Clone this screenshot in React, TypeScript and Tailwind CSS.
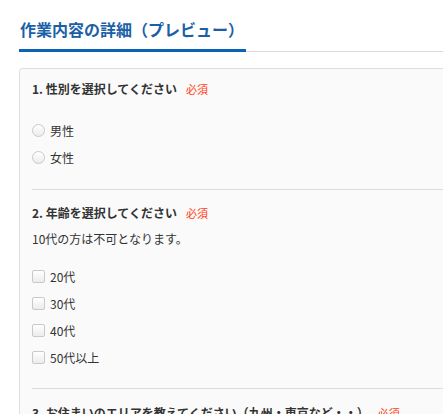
import React from "react";

const font = { fontFamily: '"Noto Sans CJK JP", "Noto Sans", sans-serif' };

function Required() {
  return <span className="ml-[9px] text-[11px] font-normal leading-[20px] text-[#ff3c14]">必須</span>;
}

function Radio({ label }: { label: string }) {
  return (
    <label className="flex h-[27px] items-center">
      <span className="box-border h-[13px] w-[13px] rounded-full border border-[#c9c9c9] bg-gradient-to-b from-[#ffffff] to-[#ececec]" />
      <span className="ml-[5px] text-[12px] leading-[20px] text-[#333]">{label}</span>
    </label>
  );
}

function Check({ label }: { label: string }) {
  return (
    <label className="flex h-[27px] items-center">
      <span className="box-border h-[13px] w-[13px] rounded-[2px] border border-[#c9c9c9] bg-gradient-to-b from-[#ffffff] to-[#ececec]" />
      <span className="ml-[5px] text-[12px] leading-[20px] text-[#333]">{label}</span>
    </label>
  );
}

export default function App() {
  return (
    <div className="h-[414px] w-full overflow-hidden bg-white pl-[19px]" style={font}>
      <div className="w-[480px] border-b border-[#dcdcdc] pt-[17px]">
        <div className="-mb-px inline-block border-b-[3px] border-[#0b63b3] pb-[8px] pl-px pr-[2px]">
          <h2 className="text-[16px] font-bold leading-[24px] text-[#1b60a6]">作業内容の詳細（プレビュー）</h2>
        </div>
      </div>

      <div className="mt-[16px] w-[480px] rounded-[3px] border border-[#dedede] bg-[#fafafa] pl-[12px]">
        <div className="pt-[10px] pb-[18px]">
          <div className="flex items-center">
            <span className="text-[12px] font-bold leading-[20px] text-[#333]">1. 性別を選択してください</span>
            <Required />
          </div>
          <div className="mt-[18px] flex flex-col">
            <Radio label="男性" />
            <Radio label="女性" />
          </div>
        </div>

        <div className="border-t border-[#dcdcdc] pt-[13px] pb-[17px]">
          <div className="flex items-center">
            <span className="text-[12px] font-bold leading-[20px] text-[#333]">2. 年齢を選択してください</span>
            <Required />
          </div>
          <p className="mt-[6px] text-[12px] leading-[20px] text-[#333]">10代の方は不可となります。</p>
          <div className="mt-[14px] flex flex-col">
            <Check label="20代" />
            <Check label="30代" />
            <Check label="40代" />
            <Check label="50代以上" />
          </div>
        </div>

        <div className="border-t border-[#dcdcdc] pt-[14px] pb-[20px]">
          <div className="flex items-center">
            <span className="text-[12px] font-bold leading-[20px] text-[#333]">3. お住まいのエリアを教えてください（九州・東京など・・）</span>
            <Required />
          </div>
        </div>
      </div>
    </div>
  );
}
